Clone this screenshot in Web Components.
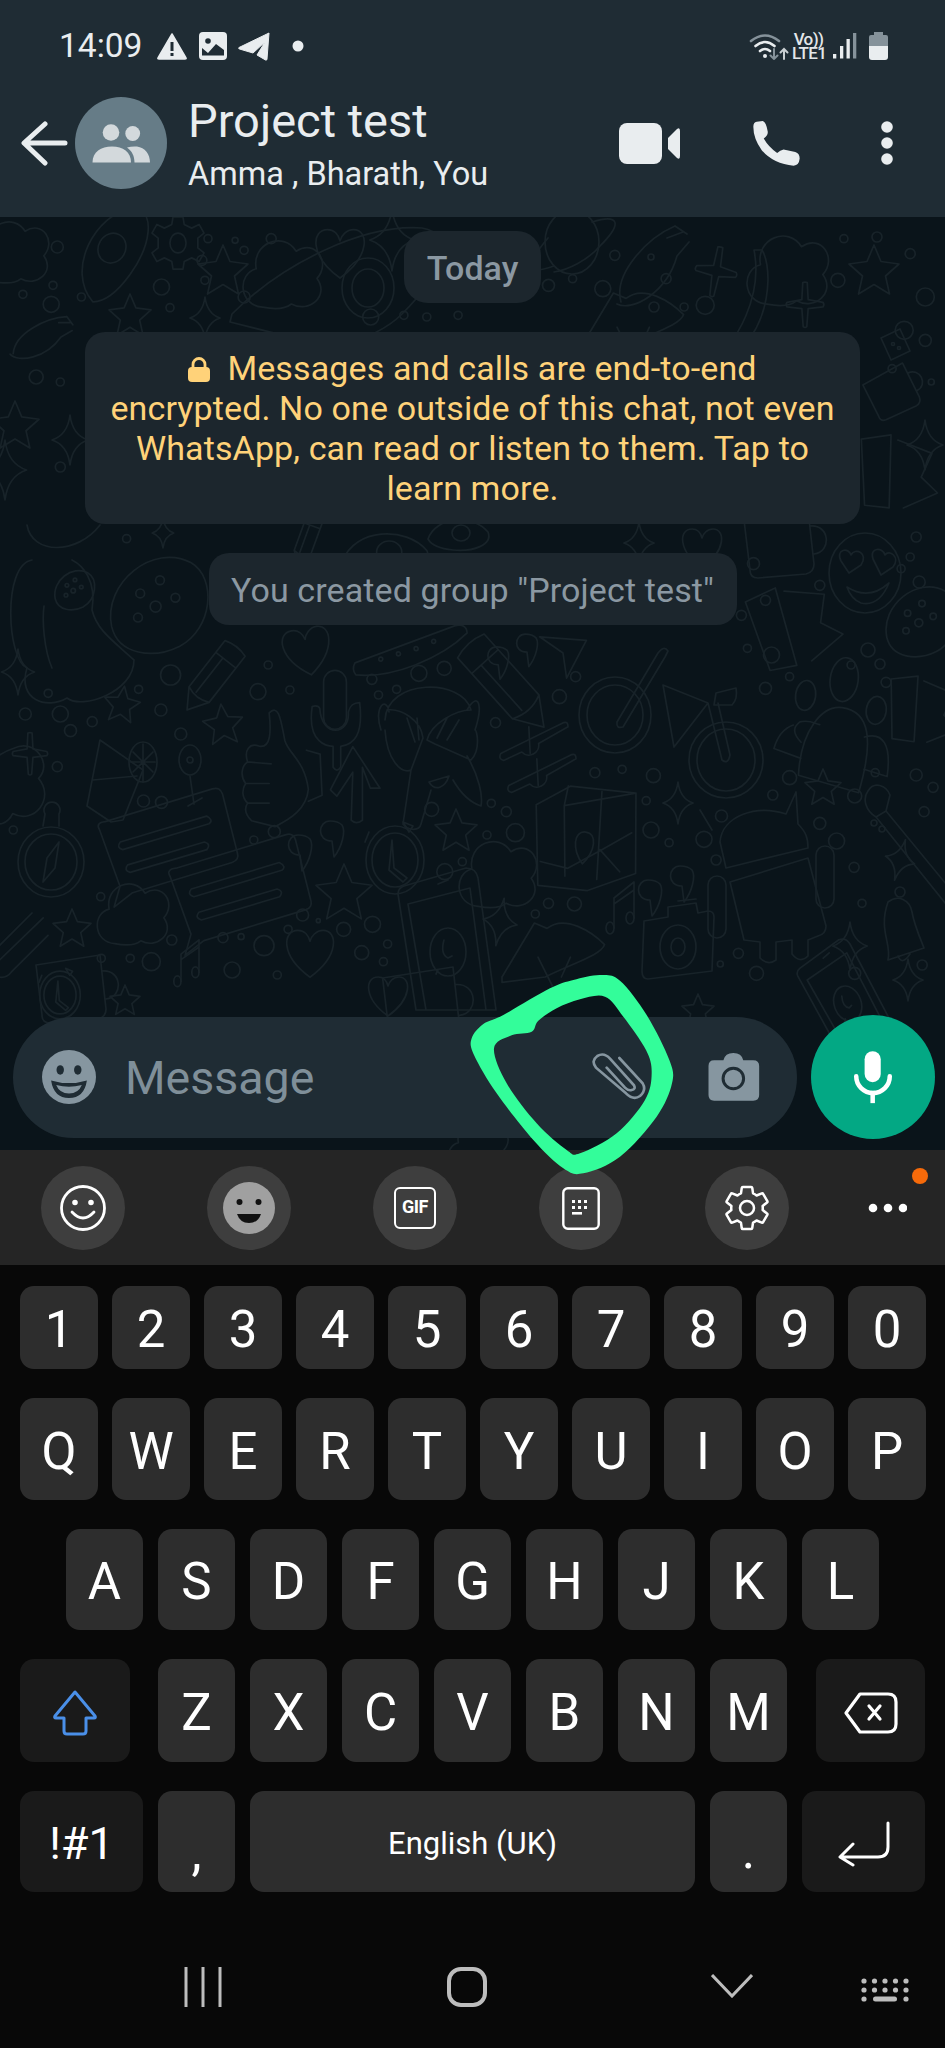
<!DOCTYPE html>
<html>
<head>
<meta charset="utf-8">
<title>Project test</title>
<style>
html,body{margin:0;padding:0;background:#080808;}
body{width:945px;height:2048px;overflow:hidden;font-family:Roboto,"Liberation Sans",sans-serif;}
</style>
</head>
<body>
<phone-screen>
  <status-bar></status-bar>
  <chat-header title="Project test" members="Amma , Bharath, You"></chat-header>
  <chat-view>
    <chat-notice kind="date">Today</chat-notice>
    <chat-notice kind="secure">Messages and calls are end-to-end<br>encrypted. No one outside of this chat, not even<br>WhatsApp, can read or listen to them. Tap to<br>learn more.</chat-notice>
    <chat-notice kind="event">You created group "Project test"</chat-notice>
    <chat-composer slot="footer" placeholder="Message"></chat-composer>
  </chat-view>
  <key-toolbar></key-toolbar>
  <soft-keyboard></soft-keyboard>
  <nav-bar></nav-bar>
  <ink-mark></ink-mark>
</phone-screen>

<script>
// small base class, every element just hands its markup over
class ShadowElement extends HTMLElement {
  constructor() {
    super();
    this.attachShadow({mode: 'open'});
  }

  connectedCallback() {
    this.shadowRoot.innerHTML = this.render();
  }
}

class PhoneScreen extends ShadowElement {
  render() {
    return `<style>
      :host{display:flex;flex-direction:column;position:relative;width:945px;height:2048px;overflow:hidden;background:#080808;}
    </style><slot></slot>`;
  }
}

class StatusBar extends ShadowElement {
  render() {
    return `<style>
      :host{display:flex;align-items:center;box-sizing:border-box;height:80px;padding:12px 57px 0 59px;background:#1f2c34;color:#e9edef;}
      .time{font:400 33.500px/40px Roboto,sans-serif;margin-right:15px;}
      svg{display:block;flex:none;}
      .right{display:flex;align-items:center;margin-left:auto;}
      .volte{font:500 17px/14px Roboto,sans-serif;margin:0 8px 0 2px;text-align:center;width:33px;color:#e3e7e9;letter-spacing:-.6px;}
    </style>
    <span class="time">14:09</span>
    <svg width="30" height="27" viewBox="0 0 30 27" style="margin-right:12px"><path d="M15 1 L29 25 Q29.500 26 28 26 H2 Q.5 26 1 25Z" fill="#e9edef" stroke="#e9edef" stroke-width="1.500" stroke-linejoin="round"/><rect x="13.500" y="9" width="3" height="9" fill="#1f2c34"/><rect x="13.500" y="20" width="3" height="3" fill="#1f2c34"/></svg>
    <svg width="28" height="28" viewBox="0 0 28 28" style="margin-right:11px"><rect x="0" y="0" width="28" height="28" rx="4" fill="#e9edef"/><circle cx="9" cy="9" r="2.800" fill="#1f2c34"/><path d="M3 16 L9 21 L17 12 L25 18 V24 H3Z" fill="#1f2c34"/><path d="M3 24 H25" stroke="#e9edef"/></svg>
    <svg width="32" height="29" viewBox="0 0 32 29" style="margin-right:22px"><path d="M31 1 L1 15.500 Q0 16.500 1.500 17 L15 21 L27 10 L19 23 L27.500 28 Q29 28.500 29 27Z" fill="#e9edef" stroke="#e9edef" stroke-linejoin="round"/></svg>
    <svg width="12" height="12" viewBox="0 0 12 12"><circle cx="6" cy="6" r="5.500" fill="#e9edef"/></svg>
    <div class="right">
      <svg width="41" height="27" viewBox="0 0 41 27" fill="none" stroke-linecap="round" stroke-width="2.600">
        <path d="M2 8 Q16 -3 30 8" stroke="#85929a"/><path d="M6.500 13 Q16 5 25.500 13" stroke="#e9edef"/><path d="M11 18 Q16 14 21 18" stroke="#e9edef"/><circle cx="16" cy="23" r="2" fill="#e9edef" stroke="none"/>
        <path d="M25 16 V26 M21.500 22.500 L25 26 L28.500 22.500" stroke="#85929a" stroke-width="2"/><path d="M35 26 V16 M31.500 19.500 L35 16 L38.500 19.500" stroke="#c9cfd2" stroke-width="2"/>
      </svg>
      <div class="volte">Vo)) LTE1</div>
      <svg width="24" height="26" viewBox="0 0 24 26" style="margin-right:12px"><rect x="0" y="21" width="3.300" height="4.500" fill="#e9edef"/><rect x="7" y="13" width="3.300" height="12.500" fill="#e9edef"/><rect x="13.500" y="6" width="3.300" height="19.500" fill="#e9edef"/><rect x="20" y="0" width="3.300" height="25.500" fill="#85929a"/></svg>
      <svg width="19" height="28" viewBox="0 0 19 28"><path d="M5 0 H14 V3 H17 Q19 3 19 5 V14 H0 V5 Q0 3 2 3 H5Z" fill="#85929a"/><path d="M0 14 H19 V25 Q19 28 16 28 H3 Q0 28 0 25Z" fill="#e9edef"/></svg>
    </div>`;
  }
}

class ChatHeader extends ShadowElement {
  render() {
    return `<style>
      :host{display:flex;align-items:center;box-sizing:border-box;height:137px;padding:0 51px 11px 20px;background:#1f2c34;color:#e9edef;flex:none;}
      svg{display:block;flex:none;}
      .who{flex:1;margin-left:21px;display:flex;flex-direction:column;gap:8px;}
      .title{font:400 47px/54px Roboto,sans-serif;}
      .sub{font:400 32.500px/36px Roboto,sans-serif;}
    </style>
    <svg width="48" height="46" viewBox="0 0 48 46" fill="none" stroke="#e9edef" stroke-width="5" stroke-linecap="round" stroke-linejoin="round" style="margin-right:7px"><path d="M45 23 H5 M25 4 L4 23 L25 43"/></svg>
    <svg width="92" height="92" viewBox="0 0 92 92"><circle cx="46" cy="46" r="46" fill="#667c87"/><g fill="#d3d9dc"><circle cx="36" cy="35.500" r="8.300"/><circle cx="57.700" cy="36.500" r="7.400"/><path d="M17.500 65.500 C17.500 55 26 49.500 37 49.500 C48 49.500 56 55 56 65.500Z"/><path d="M52 50.500 Q57 49 62 49.500 C70 50.500 75 57 75 65.500 H59.500 C59.500 59 57 54 52 50.500Z"/></g></svg>
    <div class="who"><div class="title">${this.getAttribute('title')}</div><div class="sub">${this.getAttribute('members')}</div></div>
    <svg width="61" height="41" viewBox="0 0 61 41" style="margin-right:73px"><rect x="0" y="0" width="43" height="41" rx="8" fill="#e9edef"/><path d="M49 15 L58 6 Q61 4 61 8 V33 Q61 37 58 35 L49 26Z" fill="#e9edef"/></svg>
    <svg width="47" height="45" viewBox="69 308 140 134"><path d="M80 310 L98 308 Q108 310 113 340 Q114 352 101 360 Q115 385 141 403 Q150 395 160 393 L195 400 Q208 404 208 420 Q206 441 190 441 Q130 436 95 395 Q70 360 70 325 Q70 312 80 310Z" fill="#e9edef"/></svg>
    <svg width="14" height="46" viewBox="0 0 14 46" style="margin-left:80px"><g fill="#e9edef"><circle cx="7" cy="7" r="5.800"/><circle cx="7" cy="23" r="5.800"/><circle cx="7" cy="39" r="5.800"/></g></svg>`;
  }
}

// wallpaper doodles, drawn around 0,0 and placed by the table below
const DOODLES = {
  star: '<path d="M0 -50 L14 -17 L50 -12 L23 12 L31 48 L0 29 L-31 48 L-23 12 L-50 -12 L-14 -17Z"/>',
  sparkle: '<path d="M0 -50 Q5 -10 36 0 Q5 10 0 50 Q-5 10 -36 0 Q-5 -10 0 -50Z"/>',
  plus: '<path d="M-5 -50 Q0 -52 5 -50 L7 -12 L40 -6 Q44 0 40 4 L7 8 L4 48 Q0 52 -4 48 L-7 8 L-40 4 Q-44 0 -40 -6 L-7 -12Z"/>',
  cloud: '<path d="M-28 44 C-58 42 -60 2 -36 -4 C-42 -36 -2 -52 14 -26 C38 -42 58 -12 40 8 C56 30 30 52 8 40 C-2 48 -18 46 -28 44Z"/>',
  bear: '<path d="M-45 -85 C-40 -55 5 -55 28 -85 M-40 -50 C-70 -45 -65 50 -45 58 C-55 90 -25 100 -5 88 C10 100 62 82 62 50 C40 30 25 20 20 0 C25 -30 10 -45 0 -50 M-20 58 C-28 40 -30 10 -28 -4"/>',
  heart: '<path d="M0 42 C-50 6 -46 -36 -20 -36 C-8 -36 -2 -26 0 -18 C2 -26 10 -36 22 -36 C46 -36 50 6 0 42Z"/>',
  pencil: '<path d="M-17 -50 Q0 -56 17 -50 V28 L0 54 L-17 28Z M-17 -30 H17 M-17 28 Q0 36 17 28 M-5 -30 V28"/>',
  bubble: '<path d="M-62 -34 Q-64 -42 -54 -40 L58 -38 Q66 -38 66 -30 L62 30 Q62 38 54 38 L-50 36 L-72 44 L-60 26Z M-46 -16 L44 -14 Q50 -8 44 -6 L-46 -8 Q-52 -12 -46 -16Z M-46 8 L34 10 Q40 14 34 18 L-46 16 Q-52 12 -46 8Z"/>',
  bike: '<ellipse cx="-55" cy="-10" rx="36" ry="38"/><ellipse cx="-55" cy="-10" rx="28" ry="30"/><ellipse cx="56" cy="35" rx="37" ry="38"/><ellipse cx="56" cy="35" rx="29" ry="31"/><path d="M-53 -3 L-12 -72 Q-6 -80 -2 -74 L-5 -68 L-47 2Q-54 4 -53 -3Z M-7 -40 L38 -22 L4 22 Z M46 -32 L66 -37 Q68 -26 62 -20 L44 -20Z M38 -22 L52 35 Q58 40 60 30 L48 -22"/>',
  people: '<path d="M-32 35 C-36 -10 -18 -38 2 -38 C30 -38 38 -10 30 44Z M-34 2 C-44 -6 -44 -12 -38 -18 C-28 -22 -22 -18 -18 -18 M-32 18 L-60 12 C-58 -2 -52 -10 -44 -14 M28 -12 C46 -20 56 -8 56 24 L32 20"/><ellipse cx="0" cy="-66" rx="14" ry="22"/><ellipse cx="-36" cy="-45" rx="10" ry="15"/><ellipse cx="36" cy="-40" rx="10" ry="14"/>',
  mic: '<rect x="-12" y="-48" width="24" height="62" rx="12"/><path d="M-24 -10 C-30 30 -6 32 -2 32 V54 Q2 60 6 54 V32 C20 30 30 20 26 -14 C20 -14 16 -12 14 -4 C16 20 -14 24 -16 -8 Q-18 -12 -24 -10Z"/>',
  thumb: '<path d="M-8 -48 C2 -58 4 -40 8 -20 C12 -6 28 0 32 30 C30 50 14 60 -2 68 L-26 62 C-32 56 -34 50 -30 44 C-36 38 -36 30 -32 24 C-38 16 -36 6 -30 2 C-34 -10 -28 -18 -18 -14 C-6 -12 -6 -30 -8 -48Z M30 -10 L44 -6 L46 36 L32 42 M-30 2 L-6 4 M-32 24 L-8 24 M-30 44 L-8 44"/>',
  clock: '<ellipse cx="0" cy="0" rx="29" ry="34"/><ellipse cx="0" cy="0" rx="23" ry="27"/><path d="M-3 -20 L-1 8 L12 18 L8 22 L-6 10 Z M-26 -28 L-30 -18 M8 -38 L18 -34 L14 -28 Z"/>',
  compass: '<ellipse cx="0" cy="0" rx="33" ry="35"/><ellipse cx="0" cy="0" rx="26" ry="28"/><path d="M8 -20 L4 6 L-8 20 L-4 -4Z M-8 -36 L-6 -48 A8 8 0 1 1 8 -48 L8 -36"/>',
  map: '<path d="M-52 -28 L-20 -50 L46 -50 L54 30 L8 52 L-42 52Z M-22 -50 L-24 -30 L46 -50 M-24 -30 L-16 40 M12 -48 L16 40 M-42 28 L-14 32 L18 10 L46 -10 M16 10 L38 30"/><path d="M0 -6 C-12 -6 -12 12 0 26 C12 12 12 -6 0 -6Z"/>',
  android: '<path d="M-52 -40 C-50 -66 -16 -78 14 -68 L24 -90 L26 -58 C34 -50 36 -44 36 -34 L-46 -14Z M-60 -52 L-72 -72"/><path d="M-42 0 L36 -24 L54 44 Q54 52 46 54 L36 58 V74 Q28 82 20 72 V58 L4 60 V78 Q-4 84 -12 76 V60 L-28 58Z"/><rect x="-64" y="-6" width="18" height="62" rx="9"/><rect x="44" y="-36" width="18" height="62" rx="9"/>',
  quote: '<path d="M-24 2 C-36 2 -38 22 -22 22 L-20 38 C-12 28 -8 12 -12 6 Q-16 2 -24 2Z M8 -12 C-4 -12 -6 8 10 8 L12 24 C20 14 24 -2 20 -8 Q16 -12 8 -12Z"/>',
  cocktail: '<path d="M-15 -38 L28 -8 L8 42 L-4 44 L-28 28Z M-22 2 L22 -2"/><ellipse cx="28" cy="-16" rx="14" ry="20"/><path d="M28 -34 V4 M16 -16 H40 M18 -26 L38 -6 M38 -26 L18 -6"/>',
  lollipop: '<ellipse cx="0" cy="-16" rx="11" ry="15"/><circle cx="0" cy="-16" r="3"/><path d="M0 0 L4 28 M-2 30 L12 22"/>',
  phone: '<path d="M-36 -58 L26 -76 Q36 -76 38 -66 L56 66 H-24 L-42 -50Q-42 -56 -36 -58Z M-32 -40 L30 -56 L46 66 M-32 -40 L-14 66"/><path d="M-2 -60 L8 -64"/><ellipse cx="8" cy="8" rx="18" ry="24"/><path d="M-4 30 L-2 26 M4 -4 Q0 10 8 14 L12 12"/>',
  camera: '<path d="M-32 -24 L-8 -28 V-38 L20 -42 L22 -32 L32 -34 Q38 -34 38 -28 L36 26 L-28 34 Q-34 34 -34 26Z M2 -44 L20 -46"/><ellipse cx="2" cy="2" rx="18" ry="22"/><ellipse cx="2" cy="2" rx="7" ry="9"/>',
  note: '<path d="M-10 18 V-12 L10 -28 V8 M-10 -6 L10 -20"/><ellipse cx="-14" cy="18" rx="4" ry="6"/><ellipse cx="6" cy="8" rx="4" ry="6"/>',
  bell: '<path d="M-14 -28 C-4 -36 8 -30 10 -18 C12 -6 18 8 22 18 L-14 30 C-10 14 -24 0 -14 -28Z M-4 26 Q0 36 8 24"/><circle cx="-2" cy="-38" r="5"/>',
  slider: '<path d="M-46 22 L44 -22 Q50 -24 50 -16 L8 8 A14 14 0 0 1 -16 20 L-42 32 Q-50 30 -46 22Z"/><path d="M-6 -16 L-4 22"/>',
  arrow: '<path d="M-4 -48 L30 4 L18 4 L8 -22 L8 44 Q0 50 -6 44 L-4 -16 L-24 14 L-32 6Z"/>',
  monkey: '<path d="M-46 -20 C-44 -62 32 -62 40 -30 M-50 -10 C-58 -34 -44 -44 -42 -28 M-44 -30 C-30 -32 -10 -20 -8 -2 L-20 30 C-30 34 -44 20 -46 -10 M44 -10 C52 -34 48 -50 36 -30 M40 -30 C24 -30 0 -16 -4 0 L4 4 L40 20 C50 10 46 -10 44 -10 M-20 30 L-28 84 C-24 90 -12 92 -10 84 L0 50 M36 16 C48 36 52 56 50 66 C38 62 30 54 22 40 M-2 42 C4 52 14 48 18 36 Z M-24 -22 L-16 2 M-14 -22 L-12 0 M16 -22 L6 -2 M28 -20 L16 0"/>',
  planet: '<ellipse cx="0" cy="0" rx="27" ry="32"/><path d="M-18 24 C-52 36 -44 20 -24 -4 M20 -20 C46 -28 52 -20 28 4 C16 18 -4 28 -18 30"/>',
  gear: '<path d="M-8 -42 H8 L10 -30 L22 -24 L34 -30 L42 -16 L32 -8 V8 L42 16 L34 30 L22 24 L10 30 L8 42 H-8 L-10 30 L-22 24 L-34 30 L-42 16 L-32 8 V-8 L-42 -16 L-34 -30 L-22 -24 L-10 -30Z"/><ellipse cx="0" cy="0" rx="13" ry="16"/>',
  avocado: '<path d="M-110 20 C-60 -30 20 -70 80 -66 C116 -60 100 -20 60 20 C30 50 -30 60 -40 46 L-112 28Z"/><ellipse cx="26" cy="-6" rx="26" ry="30"/><ellipse cx="26" cy="-6" rx="16" ry="19"/>',
  hand: '<path d="M-36 34 C-44 6 -10 -30 18 -42 M18 -42 L30 -34 M10 -30 L26 -36 M-40 36 C-24 44 10 24 20 -12 L32 -26"/>',
  banana: '<path d="M18 -60 C26 -20 6 36 -34 56 C-10 58 30 30 32 -30 Q32 -50 26 -60Z"/>',
  capsule: '<path d="M-56 12 L46 -18 Q58 -20 58 -10 C30 14 -20 30 -56 24 Q-60 18 -56 12Z"/><circle cx="-30" cy="10" r="2"/><circle cx="-12" cy="6" r="2"/><circle cx="6" cy="2" r="2"/><circle cx="24" cy="-4" r="2"/>',
  egg: '<path d="M-60 18 C-44 -28 30 -32 60 4 C70 30 30 44 -10 40 Q-50 36 -60 18Z"/><ellipse cx="6" cy="6" rx="18" ry="16"/>',
  love: '<ellipse cx="0" cy="0" rx="36" ry="40"/><path d="M-24 -12 C-30 -24 -16 -26 -14 -18 C-10 -26 4 -20 -4 -8 L-16 0Z M8 -14 C4 -26 18 -26 20 -18 C24 -24 36 -16 28 -6 L16 2Z M-18 14 Q4 28 24 10 Q14 34 -4 30 Q-14 26 -18 14Z"/>',
  donut: '<path d="M-44 24 C-52 -16 -6 -52 28 -34 C52 -20 48 26 18 42 C-6 54 -38 50 -44 24Z"/><circle cx="-18" cy="-6" r="4"/><circle cx="0" cy="-18" r="4"/><circle cx="-4" cy="6" r="5"/><circle cx="-20" cy="16" r="4"/><circle cx="14" cy="-2" r="4"/>',
  brush: '<path d="M-32 -34 C-26 -44 -14 -40 -10 -30 L-14 -14 L60 76 M-32 -34 C-38 -26 -34 -14 -24 -8 L-14 -14 M-24 -8 L50 84"/><circle cx="-26" cy="-2" r="3"/><circle cx="-18" cy="4" r="3"/>',
  clip: '<path d="M34 -34 L-26 24 Q-34 36 -22 40 Q-12 42 -6 34 L40 -12 M20 -40 L-34 14"/>',
  hat: '<path d="M-60 30 L-24 -30 L-10 -24 C10 -40 40 -20 54 -6 C50 6 20 14 -12 30 L-60 36Z M-20 8 L-4 40 M16 8 L6 30"/>',
  plane: '<path d="M-26 -18 L26 -14 L4 28 L0 0Z"/>',
  mug: '<path d="M-34 -20 L30 -30 L36 24 Q36 32 28 34 L-20 38 Q-28 38 -28 30Z M32 -14 C52 -16 54 12 36 14"/>',
  dice: '<path d="M-28 -14 L10 -32 L30 12 L-8 30Z"/><circle cx="-4" cy="-2" r="3"/><circle cx="8" cy="6" r="3"/>',
  word: '<path d="M-34 -36 L-4 -36 L-16 36 L-40 30Z M2 -30 L34 -12 L20 10 L34 28 L-2 38"/>'
};

// id, x, y, scale, rotation
const PLACES = [
  ['bear',72,610,1,0],['sparkle',18,672,.46,0],['pencil',212,678,.75,38],['heart',307,650,.6,-10],['capsule',410,647,1,-4],
  ['plane',563,653,.9,0],['quote',518,645,.9,0],['pencil',506,685,1.05,-42],['bike',670,725,1,0],['people',835,745,1,8],['word',925,708,.9,-6],
  ['star',122,704,.36,8],['star',223,724,.4,-6],['mic',335,716,.95,0],['monkey',431,740,1,0],['slider',533,738,.7,0],['slider',541,770,.7,0],
  ['plus',30,754,.42,0],['cocktail',115,778,1,0],['lollipop',190,776,1,0],['thumb',277,760,.98,0],['arrow',356,785,.8,0],['cloud',12,790,.8,150],
  ['compass',51,862,1,0],['bubble',169,843,1,-18],['bubble',241,890,1.02,-18],['quote',322,833,1,0],['clock',395,860,1,0],['star',456,830,.42,0],
  ['star',344,892,.56,0],['map',585,838,1,6],['cloud',500,872,.78,0],['android',772,882,1,0],['quote',672,878,1,0],['brush',900,825,1,0],
  ['star',823,787,.36,0],['sparkle',678,803,.42,0],['sparkle',500,922,.48,10],['sparkle',850,946,.48,0],['phone',440,944,1,0],['note',624,910,1,0],
  ['camera',676,945,1,0],['bell',902,930,1,0],['hat',556,950,.9,0],['cloud',135,912,.72,0],['star',72,928,.38,0],['clip',16,945,.8,0],['heart',310,952,.6,0],
  ['mug',70,985,1,0],['note',190,965,.9,0],['sparkle',900,860,.42,15],['clock',60,995,.7,0],['mug',420,1000,1.1,0],['star',125,1000,.3,0],['star',698,1010,.32,0],
  ['heart',388,995,.5,0],['sparkle',908,980,.42,0],['phone',840,1000,.75,-20],['cloud',480,1145,.6,0],
  ['planet',572,242,1,0],['gear',178,243,.62,0],['sparkle',392,240,.62,0],['heart',340,252,.62,0],['star',223,270,.5,0],['cloud',285,272,.8,0],
  ['avocado',342,294,1,0],['hand',657,268,1,0],['plus',716,272,.5,10],['cloud',790,268,.82,0],['star',874,270,.5,0],['banana',736,310,1,0],
  ['egg',105,250,.85,-60],['cloud',15,250,.72,0],['star',130,315,.42,0],['sparkle',205,318,.42,0],['hat',635,320,.9,0],['plus',805,305,.45,0],
  ['hand',45,340,.7,20],['star',15,425,.48,0],['sparkle',70,440,.5,0],['sparkle',5,470,.6,0],['love',865,573,1,0],
  ['dice',895,345,.5,0],['word',900,470,1,-8],['mug',890,390,.7,-20],['sparkle',925,445,.5,0],
  ['donut',160,600,1.1,0],['donut',75,588,.45,0],['word',796,622,1.1,-25],['donut',922,618,.8,0],['egg',385,548,.7,0],['egg',458,530,.5,0],
  ['sparkle',639,543,.42,0],['heart',702,547,.5,0],['mug',778,540,1,0],['pencil',307,540,.5,20],['sparkle',163,533,.3,0]
];

// free little circles, in the two zoom grids I read them off
const BUBBLES_LOW = [[283,105,10],[445,75,4],[428,155,8],[481,150,4],[617,118,5],[628,165,4],[658,148,4],[695,100,8],[737,85,7],[955,110,5],[928,170,7],[822,248,5],[80,160,4],[42,222,6],[100,222,8],[153,245,5],[117,272,6],[267,210,6],[230,148,4],[300,282,6],[95,380,5],[238,483,6],[268,487,6],[22,570,4],[421,600,4],[455,575,6],[716,508,7],[815,490,4],[840,515,5],[808,585,4],[855,578,9],[1080,570,8],[1110,608,4],[1168,598,8],[1197,528,6],[1072,482,4],[1188,660,5],[987,398,5],[1032,388,4],[1084,407,7],[1310,413,7],[1282,465,5],[1418,468,7],[1452,398,4],[1520,405,6],[1548,442,5],[1360,550,6],[1388,603,8],[1417,682,5],[1533,515,5],[1270,145,6],[1310,110,4],[1470,127,5],[1412,75,4],[1460,72,5],[1280,45,8],[1240,25,4],[1440,30,7],[167,770,4],[285,900,5],[370,893,5],[400,890,3],[438,917,10],[502,825,6],[478,868,4],[528,842,2],[570,868,7],[618,853,8],[600,938,7],[643,912,4],[636,965,4],[168,955,4],[216,955,4],[251,965,9],[385,990,8],[460,1005,4],[738,695,8],[767,665,4],[910,790,5],[953,792,7],[888,822,4],[1225,940,5],[1195,972,3],[1255,1000,7],[1418,1000,6],[1530,975,5],[1430,790,4]];
const BUBBLES_HIGH = [[95,90,6],[88,205,4],[38,232,4],[85,262,8],[135,240,4],[282,272,4],[268,210,8],[340,190,4],[405,240,6],[335,130,5],[345,65,4],[390,70,3],[450,65,5],[405,100,4],[615,300,8],[670,295,4],[708,300,4],[760,295,4],[910,205,6],[950,185,4],[1000,215,8],[1020,115,5],[1080,120,3],[1105,185,5],[1085,270,5],[1135,270,4],[1170,265,9],[1390,190,7],[1535,240,9],[1500,340,9],[1535,370,6],[1510,110,5],[1480,455,4],[1545,495,3],[1400,65,4],[1455,60,5],[100,750,5],[100,495,4],[60,480,7],[210,965,4],[1520,960,5],[1510,1020,4],[1495,1055,4],[1525,1095,6],[1360,1105,5],[1250,1040,6],[1270,1150,5],[1230,1195,5]];

class ChatWallpaper extends ShadowElement {
  render() {
    let body = '';
    for (const [id, x, y, s, r] of PLACES) {
      body += `<g transform="translate(${x} ${y - 217}) rotate(${r}) scale(${s})">${DOODLES[id]}</g>`;
    }
    for (const [zx, zy, r] of BUBBLES_LOW) {
      body += `<circle cx="${(zx / 1.659).toFixed(1)}" cy="${(640 + zy / 3 - 217).toFixed(1)}" r="${r}"/>`;
    }
    for (const [zx, zy, r] of BUBBLES_HIGH) {
      body += `<circle cx="${(zx / 1.659).toFixed(1)}" cy="${(zy / 3).toFixed(1)}" r="${r}"/>`;
    }
    return `<style>
      :host{display:block;position:absolute;inset:0;overflow:hidden;background:#0a141a;}
      svg{display:block;}
      svg *{vector-effect:non-scaling-stroke;}
      g,circle{fill:none;stroke:#182329;stroke-width:1.700;stroke-linejoin:round;stroke-linecap:round;}
    </style><svg width="945" height="933" viewBox="0 0 945 933">${body}</svg>`;
  }
}

class ChatView extends ShadowElement {
  render() {
    return `<style>
      :host{display:block;position:relative;height:933px;flex:none;}
      .list{position:relative;display:flex;flex-direction:column;align-items:center;gap:29px;padding-top:14px;}
      .foot{position:absolute;left:0;right:0;bottom:11px;}
    </style>
    <chat-wallpaper></chat-wallpaper>
    <div class="list"><slot></slot></div>
    <div class="foot"><slot name="footer"></slot></div>`;
  }
}

class ChatNotice extends ShadowElement {
  render() {
    const kind = this.getAttribute('kind');
    const lock = kind === 'secure' ? '<svg class="lock" width="22" height="25" viewBox="0 0 22 25"><path d="M5 11 V7.500 A6 6 0 0 1 17 7.500 V11" fill="none" stroke="#ffd279" stroke-width="2.800"/><rect x="0" y="10" width="22" height="15" rx="4" fill="#ffd279"/></svg>' : '';
    return `<style>
      :host{display:block;box-sizing:border-box;background:#1c262d;border-radius:20px;text-align:center;font:400 34px/40px Roboto,sans-serif;color:#8b98a2;letter-spacing:.12px;white-space:nowrap;}
      :host([kind=date]){height:72px;width:137px;padding-top:17px;font-weight:500;border-radius:24px;letter-spacing:0;}
      :host([kind=event]){height:72px;width:528px;padding-top:17px;border-radius:20px;}
      :host([kind=secure]){height:192px;width:775px;padding:16px 20px 0;color:#ffd279;}
      .lock{display:inline-block;vertical-align:-2px;margin-right:17px;}
    </style>${lock}<slot></slot>`;
  }
}

class ChatComposer extends ShadowElement {
  render() {
    return `<style>
      :host{display:flex;align-items:center;padding-left:13px;}
      svg{display:block;flex:none;}
      .box{display:flex;align-items:center;box-sizing:border-box;width:784px;height:121px;border-radius:61px;background:#1f2c34;padding-left:29px;position:relative;}
      .text{font:400 46.500px/54px Roboto,sans-serif;color:#7f8f99;margin-left:29px;flex:1;padding-top:2px;}
      .mic{width:124px;height:124px;border-radius:50%;background:#03a884;margin-left:14px;display:flex;align-items:center;justify-content:center;flex:none;}
    </style>
    <div class="box">
      <svg width="54" height="54" viewBox="0 0 160 160"><circle cx="80" cy="80" r="80" fill="#8696a0"/><ellipse cx="54" cy="59" rx="11" ry="14" fill="#1f2c34"/><ellipse cx="106" cy="59" rx="11" ry="14" fill="#1f2c34"/><path d="M27 90 Q80 106 133 90 Q125 142 80 142 Q35 142 27 90Z" fill="#1f2c34"/><path d="M42 104 Q80 114 118 104 Q108 129 80 129 Q52 129 42 104Z" fill="#8696a0"/></svg>
      <span class="text">${this.getAttribute('placeholder')}</span>
      <svg width="58" height="52" viewBox="390 275 174 156" fill="none" stroke="#8696a0" stroke-width="8" stroke-linecap="round" style="margin-right:60px"><path d="M478 296 L548 372 Q560 392 540 410 Q520 424 498 402 L408 325 Q392 305 412 290 Q432 278 450 298 L522 378 Q528 390 515 392 Q505 395 495 385 L440 325"/></svg>
      <svg width="52" height="48" viewBox="745 273 154 145" style="margin-right:37px"><path d="M790 295 Q795 273 820 273 Q845 273 850 295 H880 Q898 295 898 312 V400 Q898 417 880 417 H762 Q745 417 745 400 V312 Q745 295 762 295Z" fill="#8696a0"/><circle cx="820" cy="350" r="31" fill="#8696a0" stroke="#1f2c34" stroke-width="9"/></svg>
    </div>
    <div class="mic"><svg width="40" height="54" viewBox="1176 270 124 164"><rect x="1212" y="272" width="50" height="96" rx="25" fill="#fff"/><path d="M1186 350 A52 52 0 0 0 1290 350" fill="none" stroke="#fff" stroke-width="14" stroke-linecap="round"/><rect x="1230" y="395" width="14" height="38" fill="#fff"/></svg></div>`;
  }
}

class TbButton extends ShadowElement {
  render() {
    return `<style>
      :host{display:flex;align-items:center;justify-content:center;width:84px;height:84px;border-radius:50%;background:#3e3e3e;flex:none;}
    </style><slot></slot>`;
  }
}

class KeyToolbar extends ShadowElement {
  render() {
    return `<style>
      :host{display:flex;align-items:center;position:relative;box-sizing:border-box;height:115px;padding:1px 0 0 41px;gap:82px;background:#252525;flex:none;color:#fff;}
      svg{display:block;}
      .gif{box-sizing:border-box;width:42px;height:42px;border:2.800px solid #fff;border-radius:6px;font:700 18px/36px Roboto,sans-serif;text-align:center;letter-spacing:-.5px;}
      .badge{position:absolute;left:912px;top:18px;width:16px;height:16px;border-radius:50%;background:#f66a0a;}
    </style>
    <tb-button><svg width="46" height="46" viewBox="0 0 46 46" fill="none" stroke="#fff" stroke-width="2.800" stroke-linecap="round"><circle cx="23" cy="23" r="21.500"/><circle cx="15" cy="17.500" r="1.400" fill="#fff"/><circle cx="31" cy="17.500" r="1.400" fill="#fff"/><path d="M12 27 Q23 39 34 27"/></svg></tb-button>
    <tb-button><svg width="52" height="52" viewBox="0 0 52 52"><circle cx="26" cy="26" r="26" fill="#a0a0a0"/><circle cx="16.500" cy="20" r="3" fill="#111"/><circle cx="35.500" cy="20" r="3" fill="#111"/><path d="M14 32 H38 Q35 41 26 41 Q17 41 14 32Z" fill="#111"/></svg></tb-button>
    <tb-button><div class="gif">GIF</div></tb-button>
    <tb-button><svg width="38" height="43" viewBox="0 0 38 43" fill="none" stroke="#fff"><rect x="1.300" y="1.300" width="35.400" height="40.400" rx="4.500" stroke-width="2.400"/><g fill="#fff" stroke="none"><rect x="10" y="13" width="3" height="3"/><rect x="16" y="13" width="3" height="3"/><rect x="22" y="13" width="3" height="3"/><rect x="10" y="19" width="3" height="3"/><rect x="16" y="19" width="3" height="3"/><rect x="22" y="19" width="3" height="3"/><rect x="10" y="25" width="10" height="2.600"/></g></svg></tb-button>
    <tb-button><svg width="46" height="46" viewBox="1.500 1.500 21 21" fill="none" stroke="#fff" stroke-width="1.150" stroke-linejoin="round"><path d="M19.140 12.940c.04-.3.06-.61.06-.94 0-.32-.02-.64-.07-.94l2.030-1.580c.18-.14.23-.41.12-.61l-1.920-3.320c-.12-.22-.37-.29-.59-.22l-2.390.96c-.5-.38-1.030-.7-1.620-.94l-.36-2.540c-.04-.24-.24-.41-.48-.41h-3.840c-.24 0-.43.17-.47.41l-.36 2.540c-.59.24-1.130.57-1.620.94l-2.390-.96c-.22-.08-.47 0-.59.22L2.740 8.870c-.12.21-.08.47.12.61l2.030 1.580c-.05.3-.09.63-.09.94s.02.64.07.94l-2.030 1.580c-.18.14-.23.41-.12.61l1.920 3.320c.12.22.37.29.59.22l2.390-.96c.5.38 1.030.7 1.620.94l.36 2.540c.05.24.24.41.48.41h3.840c.24 0 .44-.17.47-.41l.36-2.540c.59-.24 1.130-.56 1.620-.94l2.390.96c.22.08.47 0 .59-.22l1.920-3.320c.12-.22.07-.47-.12-.61l-2.010-1.580z"/><circle cx="12" cy="12" r="3.200"/></svg></tb-button>
    <svg width="40" height="10" viewBox="0 0 40 10" style="margin-left:-4px"><g fill="#fff"><circle cx="6" cy="5" r="4.300"/><circle cx="21" cy="5" r="4.300"/><circle cx="36" cy="5" r="4.300"/></g></svg>
    <span class="badge"></span>`;
  }
}

class KbKey extends ShadowElement {
  render() {
    return `<style>
      :host{display:flex;align-items:center;justify-content:center;box-sizing:border-box;flex:0 0 var(--w,77px);background:#2d2d2d;border-radius:14px;color:#fff;font:400 51px/60px Roboto,sans-serif;padding-top:5px;}
      :host([fn]){background:#1a1a1a;}
    </style><slot></slot>`;
  }
}

class KbRow extends ShadowElement {
  render() {
    return `<style>
      :host{display:flex;gap:15px;height:var(--h,102px);padding-left:var(--l,20px);flex:none;}
    </style><slot></slot>`;
  }
}

class SoftKeyboard extends ShadowElement {
  _keys(text, extra) {
    return [...text].map((k) => `<kb-key style="${extra || ''}">${k}</kb-key>`).join('');
  }

  render() {
    const shift = '<svg width="44" height="46" viewBox="0 0 44 46" fill="none" stroke="#4a8fe8" stroke-width="3" stroke-linejoin="round"><path d="M22 2 L42 26 Q43 28 41 28 H33 V41 Q33 44 30 44 H14 Q11 44 11 41 V28 H3 Q1 28 2 26Z"/></svg>';
    const del = '<svg width="54" height="42" viewBox="0 0 54 42" fill="none" stroke="#fff" stroke-width="3.200" stroke-linejoin="round" stroke-linecap="round"><path d="M16 2 H44 Q52 2 52 10 V32 Q52 40 44 40 H16 L2 21Z"/><path d="M25 14 L36 27 M36 14 L25 27"/></svg>';
    const enter = '<svg width="52" height="46" viewBox="0 0 52 46" fill="none" stroke="#fff" stroke-width="3" stroke-linejoin="round" stroke-linecap="round"><path d="M50 2 V26 Q50 36 40 36 H3 M15 23 L2 36 L15 44"/></svg>';
    return `<style>
      :host{display:flex;flex-direction:column;gap:29px;padding-top:21px;flex:none;}
      kb-row:first-child{margin-bottom:1px;}
    </style>
    <kb-row style="--h:83px">${this._keys('1234567890', '--w:78px;margin-right:-1px')}</kb-row>
    <kb-row>${this._keys('QWERTYUIOP', '--w:78px;margin-right:-1px')}</kb-row>
    <kb-row style="--l:66px;--h:101px">${this._keys('ASDFGHJKL')}</kb-row>
    <kb-row style="--h:103px">
      <kb-key fn style="--w:110px;margin-right:13px">${shift}</kb-key>${this._keys('ZXCVBNM')}<kb-key fn style="--w:109px;margin-left:14px">${del}</kb-key>
    </kb-row>
    <kb-row style="--h:101px">
      <kb-key fn style="--w:123px;font-size:45px">!#1</kb-key>
      <kb-key style="padding-top:22px">,</kb-key>
      <kb-key style="--w:445px;font-size:31px">English (UK)</kb-key>
      <kb-key style="padding-top:18px">.</kb-key>
      <kb-key fn style="--w:123px">${enter}</kb-key>
    </kb-row>`;
  }
}

class NavBar extends ShadowElement {
  render() {
    return `<style>
      :host{display:flex;align-items:flex-start;padding:75px 0 0 184px;flex:none;}
      svg{display:block;flex:none;}
    </style>
    <svg width="38" height="40" viewBox="0 0 38 40" stroke="#bdbdbd" stroke-width="3"><path d="M2 0 V40 M19 0 V40 M36 0 V40"/></svg>
    <svg width="40" height="40" viewBox="0 0 40 40" fill="none" stroke="#bdbdbd" stroke-width="4" style="margin-left:225px"><rect x="2" y="2" width="36" height="36" rx="12"/></svg>
    <svg width="42" height="24" viewBox="0 0 42 24" fill="none" stroke="#bdbdbd" stroke-width="3" style="margin-left:224px;margin-top:7px"><path d="M1 1 L21 22 L41 1"/></svg>
    <svg width="48" height="24" viewBox="0 0 48 24" fill="#bdbdbd" style="margin-left:108px;margin-top:11px"><circle cx="3" cy="3" r="2.600"/><circle cx="13.500" cy="3" r="2.600"/><circle cx="24" cy="3" r="2.600"/><circle cx="34.500" cy="3" r="2.600"/><circle cx="45" cy="3" r="2.600"/><circle cx="3" cy="12" r="2.600"/><circle cx="13.500" cy="12" r="2.600"/><circle cx="24" cy="12" r="2.600"/><circle cx="34.500" cy="12" r="2.600"/><circle cx="45" cy="12" r="2.600"/><circle cx="3" cy="21" r="2.600"/><rect x="12" y="18.500" width="24" height="5" rx="2.500"/><circle cx="45" cy="21" r="2.600"/></svg>`;
  }
}

// hand drawn highlight around the attach icon, outline read from the zoom grid
class InkMark extends ShadowElement {
  _smooth(pts) {
    const n = pts.length;
    let d = `M${pts[0][0]} ${pts[0][1]}`;
    for (let i = 0; i < n; i++) {
      const p0 = pts[(i - 1 + n) % n], p1 = pts[i], p2 = pts[(i + 1) % n], p3 = pts[(i + 2) % n];
      const c1 = [p1[0] + (p2[0] - p0[0]) / 6, p1[1] + (p2[1] - p0[1]) / 6];
      const c2 = [p2[0] - (p3[0] - p1[0]) / 6, p2[1] - (p3[1] - p1[1]) / 6];
      d += `C${c1[0]} ${c1[1]} ${c2[0]} ${c2[1]} ${p2[0]} ${p2[1]}`;
    }
    return d + 'Z';
  }

  render() {
    const outer = [[420,45],[480,62],[560,165],[628,300],[636,370],[590,470],[480,590],[370,640],[310,625],[220,540],[110,400],[42,285],[35,235],[70,192],[130,165],[270,85],[340,60]];
    const inner = [[435,110],[490,170],[558,270],[575,340],[555,420],[470,520],[360,580],[320,570],[230,490],[140,370],[102,265],[155,226],[215,215],[235,182],[290,145],[360,118]];
    return `<style>
      :host{display:block;position:absolute;left:460px;top:960px;width:485px;height:320px;pointer-events:none;}
      svg{display:block;}
    </style><svg width="485" height="320" viewBox="0 0 1455 960"><path fill="#33fd9a" fill-rule="evenodd" d="${this._smooth(outer)}${this._smooth(inner)}"/></svg>`;
  }
}

customElements.define('chat-wallpaper', ChatWallpaper);
customElements.define('phone-screen', PhoneScreen);
customElements.define('status-bar', StatusBar);
customElements.define('chat-header', ChatHeader);
customElements.define('chat-view', ChatView);
customElements.define('chat-notice', ChatNotice);
customElements.define('chat-composer', ChatComposer);
customElements.define('tb-button', TbButton);
customElements.define('key-toolbar', KeyToolbar);
customElements.define('kb-key', KbKey);
customElements.define('kb-row', KbRow);
customElements.define('soft-keyboard', SoftKeyboard);
customElements.define('nav-bar', NavBar);
customElements.define('ink-mark', InkMark);
</script>
</body>
</html>
